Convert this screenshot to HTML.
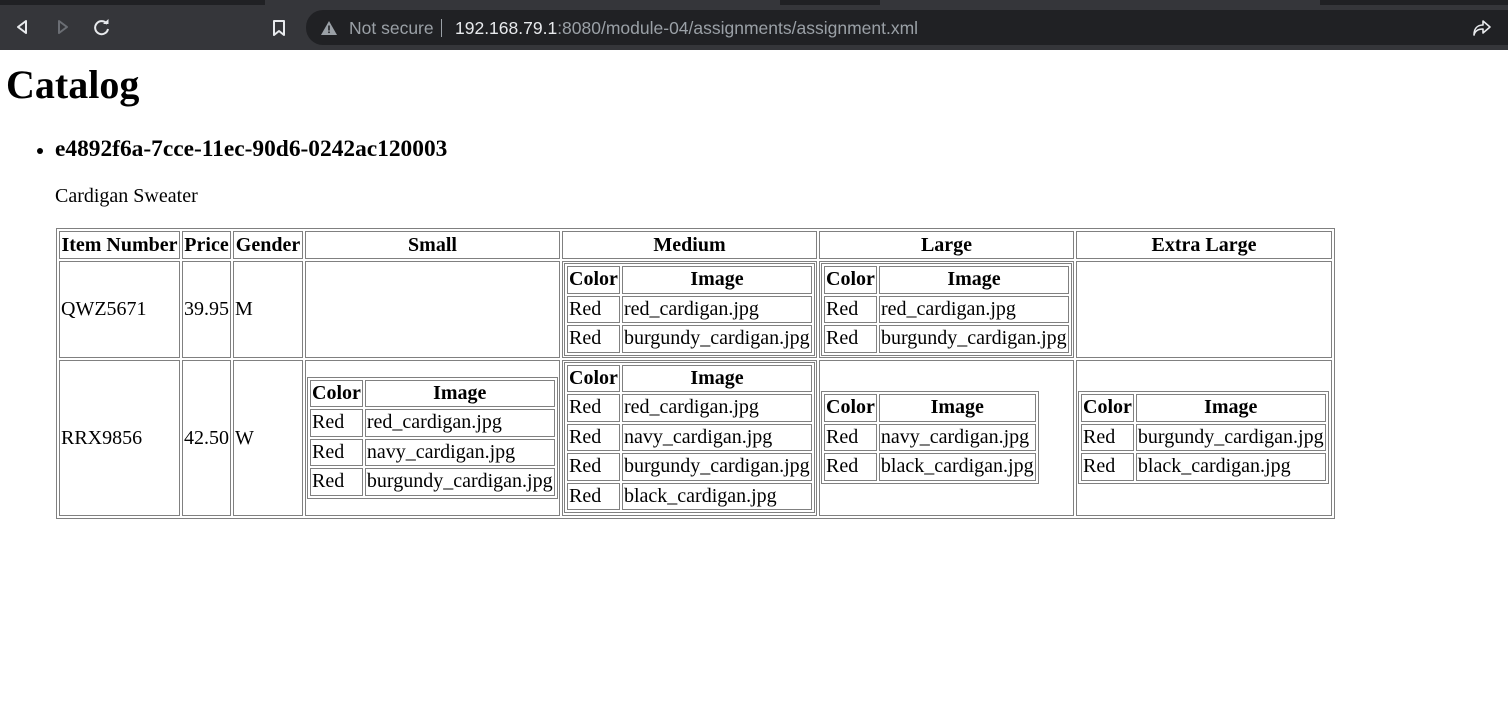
<!DOCTYPE html>
<html><head><meta charset="utf-8"><style>
html,body{margin:0;padding:0;background:#fff}
body{width:1508px;height:718px;overflow:hidden;font-family:"Liberation Serif",serif;font-size:20px;color:#000}
.chrome{height:50px;background:#35363a;position:relative}
.tabs{height:5px;background:#202124}
.tabs .t{position:absolute;top:0;height:5px;background:#35363a}
.addr{position:absolute;left:306px;top:10px;right:0;height:35px;background:#202124;border-radius:17px 0 0 17px;font-family:"Liberation Sans",sans-serif;font-size:17.5px;color:#9aa0a6;line-height:37px}
.addr .ns{position:absolute;left:43px}
.addr .sep{position:absolute;left:135px;top:9px;width:1px;height:18px;background:#9aa0a6}
.addr .url{position:absolute;left:149px}
.addr .url b{font-weight:normal;color:#e8eaed}
.ic{position:absolute}
.content{padding:0 6px}
h1{font-size:40px;margin:0;padding-top:12px;line-height:46px;font-weight:bold}
ul{margin:28px 0 0 0;padding-left:49px}
h3{font-size:23.4px;margin:0;line-height:27px}
p{margin:0;padding-top:22px;line-height:23px}
table.m{border-collapse:separate;border-spacing:2px;border:1px solid #808080;table-layout:fixed;margin:20px 0 0 1px}
td,th{border:1px solid #808080;padding:1px;line-height:24px;white-space:nowrap}
table.i{border-collapse:separate;border-spacing:2px;border:1px solid #808080}
table.i td,table.i th{line-height:23.5px}
th{font-weight:bold}
.m>tbody>tr>td{vertical-align:middle}
</style></head><body>
<div class="chrome">
<div class="tabs"><div class="t" style="left:265px;width:515px"></div><div class="t" style="left:880px;width:440px"></div></div>
<svg class="ic" style="left:14px;top:19px" width="16" height="16" viewBox="0 0 16 16"><path d="M12 2 L4 8 L12 14 Z" fill="none" stroke="#e8eaed" stroke-width="2" stroke-linejoin="round"/></svg>
<svg class="ic" style="left:55px;top:19px" width="16" height="16" viewBox="0 0 16 16"><path d="M4 2 L12 8 L4 14 Z" fill="none" stroke="#6b6e74" stroke-width="2" stroke-linejoin="round"/></svg>
<svg class="ic" style="left:93px;top:19px" width="18" height="18" viewBox="0 0 18 18"><path d="M14 5 A6.5 6.5 0 1 0 15 10" fill="none" stroke="#e8eaed" stroke-width="2"/><path d="M10 5 L15.5 5 L15.5 0 Z" fill="#e8eaed"/></svg>
<svg class="ic" style="left:272px;top:20px" width="14" height="17" viewBox="0 0 14 17"><path d="M2 1 H12 V15 L7 11 L2 15 Z" fill="none" stroke="#e8eaed" stroke-width="2" stroke-linejoin="round"/></svg>
<div class="addr">
<svg class="ic" style="left:15px;top:11px" width="16" height="14" viewBox="0 0 16 14"><path d="M8 0 L16 14 H0 Z" fill="#9aa0a6"/><rect x="7.2" y="4.5" width="1.6" height="5" fill="#202124"/><rect x="7.2" y="10.5" width="1.6" height="1.6" fill="#202124"/></svg>
<span class="ns">Not secure</span><span class="sep"></span>
<span class="url"><b>192.168.79.1</b>:8080/module-04/assignments/assignment.xml</span>
<svg class="ic" style="left:1166px;top:9px" width="20" height="18" viewBox="0 0 20 18"><path d="M11 2 L18 8 L11 14 V10 C6 10 3 12 2 16 C2 10 5 6 11 6 Z" fill="none" stroke="#e8eaed" stroke-width="1.6" stroke-linejoin="round"/></svg>
</div>
</div>
<div class="content">
<h1>Catalog</h1>
<ul><li><h3>e4892f6a-7cce-11ec-90d6-0242ac120003</h3>
<p>Cardigan Sweater</p>
<table class="m">
<colgroup><col style="width:121px"><col style="width:49px"><col style="width:70px"><col style="width:255px"><col style="width:255px"><col style="width:255px"><col style="width:256px"></colgroup>
<tr style="height:28px"><th>Item Number</th><th>Price</th><th>Gender</th><th>Small</th><th>Medium</th><th>Large</th><th>Extra Large</th></tr>
<tr style="height:95px"><td>QWZ5671</td><td>39.95</td><td>M</td><td></td>
<td><table class="i" style="width:100%"><tr><th>Color</th><th>Image</th></tr><tr><td>Red</td><td>red_cardigan.jpg</td></tr><tr><td>Red</td><td>burgundy_cardigan.jpg</td></tr></table></td>
<td><table class="i" style="width:100%"><tr><th>Color</th><th>Image</th></tr><tr><td>Red</td><td>red_cardigan.jpg</td></tr><tr><td>Red</td><td>burgundy_cardigan.jpg</td></tr></table></td>
<td></td></tr>
<tr style="height:156px"><td>RRX9856</td><td>42.50</td><td>W</td>
<td><table class="i"><tr><th>Color</th><th>Image</th></tr><tr><td>Red</td><td>red_cardigan.jpg</td></tr><tr><td>Red</td><td>navy_cardigan.jpg</td></tr><tr><td>Red</td><td>burgundy_cardigan.jpg</td></tr></table></td>
<td><table class="i" style="width:100%"><tr><th>Color</th><th>Image</th></tr><tr><td>Red</td><td>red_cardigan.jpg</td></tr><tr><td>Red</td><td>navy_cardigan.jpg</td></tr><tr><td>Red</td><td>burgundy_cardigan.jpg</td></tr><tr><td>Red</td><td>black_cardigan.jpg</td></tr></table></td>
<td><table class="i"><tr><th>Color</th><th>Image</th></tr><tr><td>Red</td><td>navy_cardigan.jpg</td></tr><tr><td>Red</td><td>black_cardigan.jpg</td></tr></table></td>
<td><table class="i"><tr><th>Color</th><th>Image</th></tr><tr><td>Red</td><td>burgundy_cardigan.jpg</td></tr><tr><td>Red</td><td>black_cardigan.jpg</td></tr></table></td>
</tr>
</table>
</li></ul>
</div>
</body></html>
